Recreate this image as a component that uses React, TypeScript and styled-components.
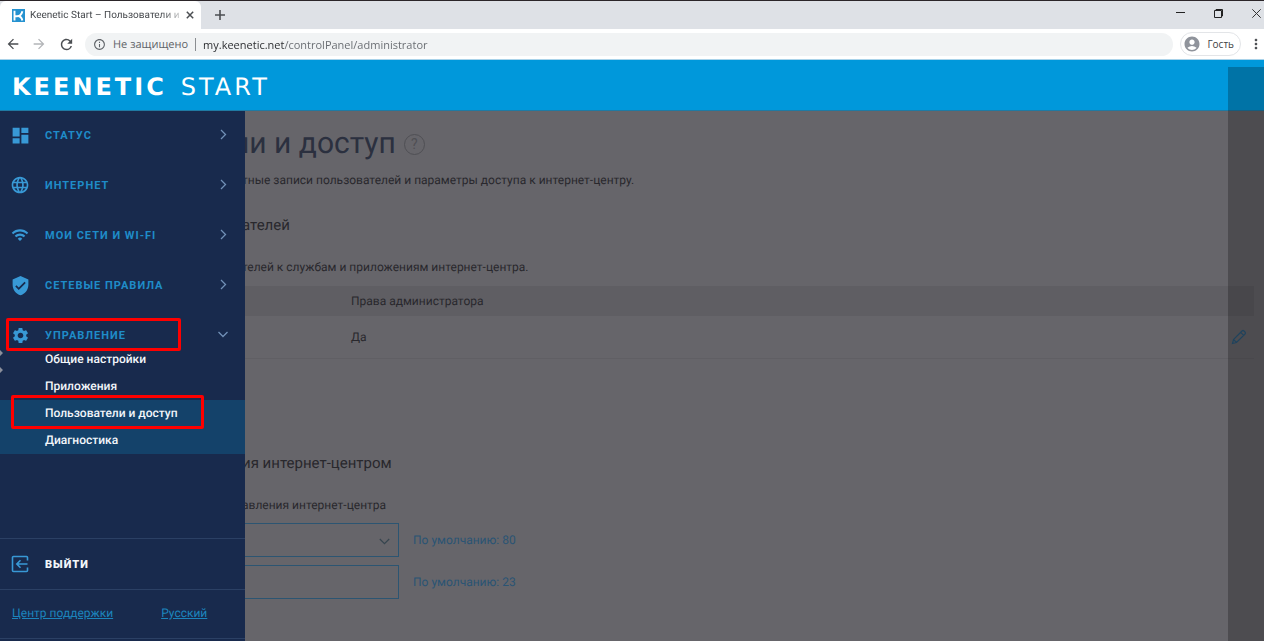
import React from "react";
import styled, { createGlobalStyle, css } from "styled-components";
import {
  MdAccountCircle,
  MdArrowBack,
  MdArrowForward,
  MdDashboard,
  MdInfoOutline,
  MdLanguage,
  MdMoreVert,
  MdRefresh,
  MdSettings,
  MdVerifiedUser,
  MdWifi,
} from "react-icons/md";

const GlobalStyle = createGlobalStyle`
  * { box-sizing: border-box; }
  body { margin: 0; background: #66656a; font-family: Roboto, "Liberation Sans", sans-serif; text-rendering: geometricPrecision; }
  h1, h2, p, ul { margin: 0; padding: 0; font-weight: 400; }
  ul { list-style: none; }
  button { border: 0; padding: 0; background: none; font: inherit; color: inherit; }
  svg { display: block; flex: none; }
`;

const Page = styled.div`
  position: relative;
  display: flex;
  flex-direction: column;
  min-height: 100vh;
  overflow: hidden;
`;

/* Browser window */
const TabStrip = styled.div`
  display: flex;
  align-items: stretch;
  height: 29px;
  border-top: 1px solid #2b2529;
  background: #dee1e6;
`;

const Tab = styled.div`
  display: flex;
  align-items: center;
  gap: 5px;
  width: 201px;
  padding: 0 6px 0 12px;
  border-radius: 6px 6px 0 0;
  background: #fff;
`;

const TabTitle = styled.span`
  flex: 1;
  white-space: nowrap;
  font-size: 10px;
  color: #45484c;
  mask-image: linear-gradient(to right, #000 88%, rgba(0, 0, 0, 0.3));
`;

const IconButton = styled.button<{ $w?: number; $color?: string }>`
  display: flex;
  align-items: center;
  justify-content: center;
  width: ${(p) => p.$w ?? 26}px;
  color: ${(p) => p.$color ?? "#4b4e52"};
`;

const WindowButtons = styled.div`
  display: flex;
  margin-left: auto;
  margin-right: -11px;
  padding-bottom: 4px;
`;

const Toolbar = styled.div`
  display: flex;
  align-items: center;
  height: 31px;
  border-bottom: 1px solid #a9d3ea;
  background: #fff;
  font-family: "Open Sans", "Noto Sans", sans-serif;
  font-size: 11px;
`;

const AddressBar = styled.label`
  display: flex;
  flex: 1;
  align-items: center;
  gap: 7px;
  height: 23px;
  margin: 0 7px 0 5px;
  padding: 0 8px;
  border-radius: 12px;
  background: #f1f3f4;
  color: #5f6368;
  white-space: nowrap;
`;

const Divider = styled.span`
  width: 1px;
  height: 13px;
  background: #8a8d91;
`;

const AddressInput = styled.input`
  flex: 1;
  min-width: 0;
  border: 0;
  padding: 0;
  outline: 0;
  font: inherit;
  color: #27292c;
  background: linear-gradient(to right, #27292c 82px, #65696e 82px);
  background-clip: text;
  -webkit-text-fill-color: transparent;
`;

const Profile = styled.button`
  display: flex;
  align-items: center;
  gap: 6px;
  height: 24px;
  margin-right: 7px;
  padding: 0 6px 0 2px;
  border: 1px solid #e3e5e8;
  border-radius: 12px;
  font-size: 10px;
  color: #3c4043;
`;

/* Router web interface */
const Header = styled.header`
  position: relative;
  z-index: 1;
  display: flex;
  align-items: center;
  height: 50px;
  padding: 4px 12px 0;
  background: #0098db;
  box-shadow: 0 1px 0 #1f7aa3;
`;

const Wordmark = styled.div`
  display: flex;
  gap: 14px;
  font-family: "DejaVu Sans", sans-serif;
  font-size: 24px;
  line-height: 24px;
  letter-spacing: 3px;
  color: #fff;
`;

const WordmarkLight = styled.span`
  font-weight: 400;
`;

const Body = styled.div`
  position: relative;
  display: flex;
  flex: 1;
`;

const Drawer = styled.aside`
  position: absolute;
  inset: 0 auto 0 0;
  display: flex;
  flex-direction: column;
  width: 245px;
  background: #182a4d;
`;

const NavButton = styled.button`
  position: relative;
  display: flex;
  align-items: center;
  width: 100%;
  height: 50px;
  padding-right: 16px;
  text-align: left;
  text-transform: uppercase;
  font-size: 11px;
  font-weight: 700;
  letter-spacing: 1px;
  color: #1f8cc8;
`;

const ExitButton = styled(NavButton)`
  font-weight: 900;
  color: #f2f6fa;
`;

const NavIcon = styled.span`
  display: flex;
  justify-content: center;
  width: 40px;
  margin-right: 5px;
  color: #3899d6;
`;

const NavLabel = styled.span`
  flex: 1;
`;

const SubList = styled.ul`
  margin-top: -14px;
`;

const SubItem = styled.li<{ $active?: boolean }>`
  position: relative;
  height: 27px;
  ${(p) => p.$active && css`background: #14426a;`}
`;

const SubLink = styled.a`
  display: block;
  padding-left: 45px;
  font-size: 12px;
  font-weight: 500;
  line-height: 27px;
  color: #f2f6fa;
  text-decoration: none;
`;

const Highlight = styled.span<{ $left: number; $width: number; $height: number; $top: number }>`
  position: absolute;
  z-index: 2;
  top: ${(p) => p.$top}px;
  left: ${(p) => p.$left}px;
  width: ${(p) => p.$width}px;
  height: ${(p) => p.$height}px;
  border: 3px solid #fe0000;
  border-radius: 2px;
  pointer-events: none;
`;

const EdgeMark = styled.svg`
  position: absolute;
  top: 240px;
  left: 0;
`;

const DrawerFooter = styled.div`
  margin-top: auto;
  margin-bottom: 2px;
  border-top: 1px solid #2b4064;
  border-bottom: 1px solid #2b4064;
`;

const FooterLinks = styled.div`
  display: flex;
  gap: 48px;
  height: 49px;
  padding-left: 12px;
  border-top: 1px solid #2b4064;
  font-size: 12px;
  line-height: 46px;
`;

const FooterLink = styled.a`
  color: #1c84bc;
  text-decoration: underline;
`;

const Content = styled.main`
  flex: 1;
  min-width: 0;
  padding: 14px 10px 0 242px;
  font-size: 12px;
  line-height: 20px;
  color: #29282d;
`;

const Title = styled.h1`
  display: flex;
  align-items: center;
  gap: 8px;
  margin-left: -10px;
  font-size: 30px;
  line-height: 40px;
  color: #2b303f;
`;

const Help = styled.button`
  width: 21px;
  height: 21px;
  border: 1px solid #4f4f54;
  border-radius: 50%;
  font-size: 14px;
  line-height: 18px;
  color: #4f4f54;
`;

const Lead = styled.p`
  margin-top: 6px;
`;

const Section = styled.section<{ $gap: number }>`
  margin-top: ${(p) => p.$gap}px;
`;

const SectionTitle = styled.h2`
  margin-bottom: 20px;
  font-size: 15px;
  line-height: 24px;
`;

const UsersTable = styled.table`
  width: 100%;
  margin-top: 9px;
  border-collapse: collapse;
  table-layout: fixed;
  text-align: left;

  th, td { padding: 0; font-weight: 400; }
  th { height: 30px; background: #5f5e63; }
  td { height: 42px; border-bottom: 1px solid #605f64; }
  th:first-child { width: 109px; }
  th:last-child { width: 24px; }
`;

const Field = styled.div`
  display: flex;
  align-items: center;
  gap: 14px;
  margin-top: 8px;
  color: #2a5474;
`;

const boxStyle = css`
  appearance: none;
  width: 157px;
  height: 34px;
  padding: 0 8px;
  border: 1px solid #2c5572;
  border-radius: 0;
  outline: 0;
  background: transparent;
  font: inherit;
  color: #29282d;
`;

const SelectWrap = styled.span`
  position: relative;
  display: flex;
  svg { position: absolute; right: 9px; top: 15px; }
`;

const PortSelect = styled.select`${boxStyle}`;
const PortInput = styled.input`${boxStyle}`;

const SideShade = styled.div`
  position: absolute;
  z-index: 3;
  top: 67px;
  right: 0;
  bottom: 0;
  width: 36px;
  background: rgba(0, 0, 0, 0.24);
  pointer-events: none;
`;

const Chevron = ({ down }: { down?: boolean }) => (
  <svg width="12" height="12" viewBox="0 0 12 12" fill="none" stroke="#7190b7" strokeWidth="1.3">
    <path d={down ? "M1.5 3 6 7.500l4.500-4.500" : "M4 1 8.500 5.500 4 10"} />
  </svg>
);

const ExitIcon = () => (
  <svg width="18" height="18" viewBox="0 0 18 18" fill="none" stroke="#3899d6" strokeWidth="1.6">
    <path d="M16.500 5.500V2.500a1 1 0 0 0-1-1H2.500a1 1 0 0 0-1 1v13a1 1 0 0 0 1 1h13a1 1 0 0 0 1-1v-3M16.500 9H6M9.500 5.300 5.800 9l3.700 3.700" />
  </svg>
);

const sections = [
  { label: "Статус", icon: <MdDashboard size={21} /> },
  { label: "Интернет", icon: <MdLanguage size={20} /> },
  { label: "Мои сети и Wi-Fi", icon: <MdWifi size={18} /> },
  { label: "Сетевые правила", icon: <MdVerifiedUser size={21} /> },
];

const App = () => (
  <Page>
    <GlobalStyle />
    <TabStrip>
      <Tab>
        <svg width="13" height="13" viewBox="0 0 13 13">
          <rect width="13" height="13" fill="#2592d0" />
          <path d="M2.500 1.800v9.700M2.500 7.200h2.500c2.800 0 4.600-1.800 5.400-5M6.300 7c2.400.4 3.600 2 4 4.500" fill="none" stroke="#fff" strokeWidth="1.900" />
        </svg>
        <TabTitle>Keenetic Start – Пользователи и</TabTitle>
        <IconButton $w={15} aria-label="Закрыть вкладку">
          <svg width="8" height="8" viewBox="0 0 8 8" stroke="currentColor" strokeWidth="1.500"><path d="m.8.8 6.400 6.400M7.200.8.8 7.200" /></svg>
        </IconButton>
      </Tab>
      <IconButton $w={38} aria-label="Новая вкладка">
        <svg width="10" height="10" viewBox="0 0 10 10" stroke="currentColor" strokeWidth="1.600"><path d="M5 0v10M0 5h10" /></svg>
      </IconButton>
      <WindowButtons>
        <IconButton $w={38} aria-label="Свернуть">
          <svg width="9" height="9" viewBox="0 0 9 9" stroke="#222" fill="none"><path d="M0 3.500h9" /></svg>
        </IconButton>
        <IconButton $w={38} aria-label="Развернуть">
          <svg width="9" height="9" viewBox="0 0 9 9" stroke="#222" fill="none"><path d="M.5 1.500h7v7h-7zM2 1.500V.5h6.500V7h-1" /></svg>
        </IconButton>
        <IconButton $w={38} aria-label="Закрыть">
          <svg width="9" height="9" viewBox="0 0 9 9" stroke="#333" fill="none"><path d="m.3.3 8.400 8.400M8.700.3.3 8.700" /></svg>
        </IconButton>
      </WindowButtons>
    </TabStrip>
    <Toolbar>
      <IconButton aria-label="Назад"><MdArrowBack size={16} /></IconButton>
      <IconButton aria-label="Вперёд" $color="#b3b5b8"><MdArrowForward size={16} /></IconButton>
      <IconButton $w={28} aria-label="Обновить"><MdRefresh size={17} /></IconButton>
      <AddressBar>
        <MdInfoOutline size={13} />
        <span>Не защищено</span>
        <Divider />
        <AddressInput aria-label="Адрес" defaultValue="my.keenetic.net/controlPanel/administrator" />
      </AddressBar>
      <Profile><MdAccountCircle size={18} color="#8f939b" />Гость</Profile>
      <IconButton $w={16} aria-label="Меню"><MdMoreVert size={16} /></IconButton>
    </Toolbar>
    <Header>
      <Wordmark>
        <b>KEENETIC</b>
        <WordmarkLight>START</WordmarkLight>
      </Wordmark>
    </Header>
    <Body>
      <Content>
        <Title>
          ли и доступ
          <Help aria-label="Справка">?</Help>
        </Title>
        <Lead>тные записи пользователей и параметры доступа к интернет-центру.</Lead>
        <Section $gap={23}>
          <SectionTitle>ателей</SectionTitle>
          <p>телей к службам и приложениям интернет-центра.</p>
          <UsersTable>
            <thead>
              <tr><th /><th>Права администратора</th><th /></tr>
            </thead>
            <tbody>
              <tr>
                <td />
                <td>Да</td>
                <td>
                  <IconButton $w={17} aria-label="Изменить" $color="#2b587a">
                    <svg width="16" height="16" viewBox="0 0 16 16" fill="none" stroke="currentColor" strokeWidth="1.200">
                      <path d="m1.500 14.500 1-4L11 2q1-1 2 0l1 1q1 1 0 2L5.500 13.500zM9.700 3.300l3 3M2.500 10.500l3 3" />
                    </svg>
                  </IconButton>
                </td>
              </tr>
            </tbody>
          </UsersTable>
        </Section>
        <Section $gap={92}>
          <SectionTitle>ия интернет-центром</SectionTitle>
          <p>авления интернет-центра</p>
          <Field>
            <SelectWrap>
              <PortSelect aria-label="Порт веб-интерфейса" />
              <svg width="11" height="7" viewBox="0 0 11 7" fill="none" stroke="#36454f" strokeWidth="1.200"><path d="m.8 1 4.700 4.700L10.200 1" /></svg>
            </SelectWrap>
            По умолчанию: 80
          </Field>
          <Field>
            <PortInput aria-label="Порт командной строки" />
            По умолчанию: 23
          </Field>
        </Section>
      </Content>
      <Drawer>
        <nav>
          {sections.map((s) => (
            <NavButton key={s.label}>
              <NavIcon>{s.icon}</NavIcon>
              <NavLabel>{s.label}</NavLabel>
              <Chevron />
            </NavButton>
          ))}
          <NavButton aria-expanded="true">
            <NavIcon><MdSettings size={19} /></NavIcon>
            <NavLabel>Управление</NavLabel>
            <Chevron down />
            <Highlight $top={8} $left={6} $width={175} $height={33} />
          </NavButton>
          <SubList>
            <SubItem><SubLink href="#general">Общие настройки</SubLink></SubItem>
            <SubItem><SubLink href="#apps">Приложения</SubLink></SubItem>
            <SubItem $active>
              <SubLink href="#users">Пользователи и доступ</SubLink>
              <Highlight $top={-5} $left={11} $width={193} $height={34} />
            </SubItem>
            <SubItem $active><SubLink href="#diagnostics">Диагностика</SubLink></SubItem>
          </SubList>
        </nav>
        <EdgeMark width="4" height="24" viewBox="0 0 4 24" fill="#8b8f9b">
          <path d="M0 0l3 3-3 3zM0 17l3 3-3 3z" />
        </EdgeMark>
        <DrawerFooter>
          <ExitButton>
            <NavIcon><ExitIcon /></NavIcon>
            <NavLabel>Выйти</NavLabel>
          </ExitButton>
          <FooterLinks>
            <FooterLink href="#support">Центр поддержки</FooterLink>
            <FooterLink href="#language">Русский</FooterLink>
          </FooterLinks>
        </DrawerFooter>
      </Drawer>
    </Body>
    <SideShade />
  </Page>
);

export default App;
